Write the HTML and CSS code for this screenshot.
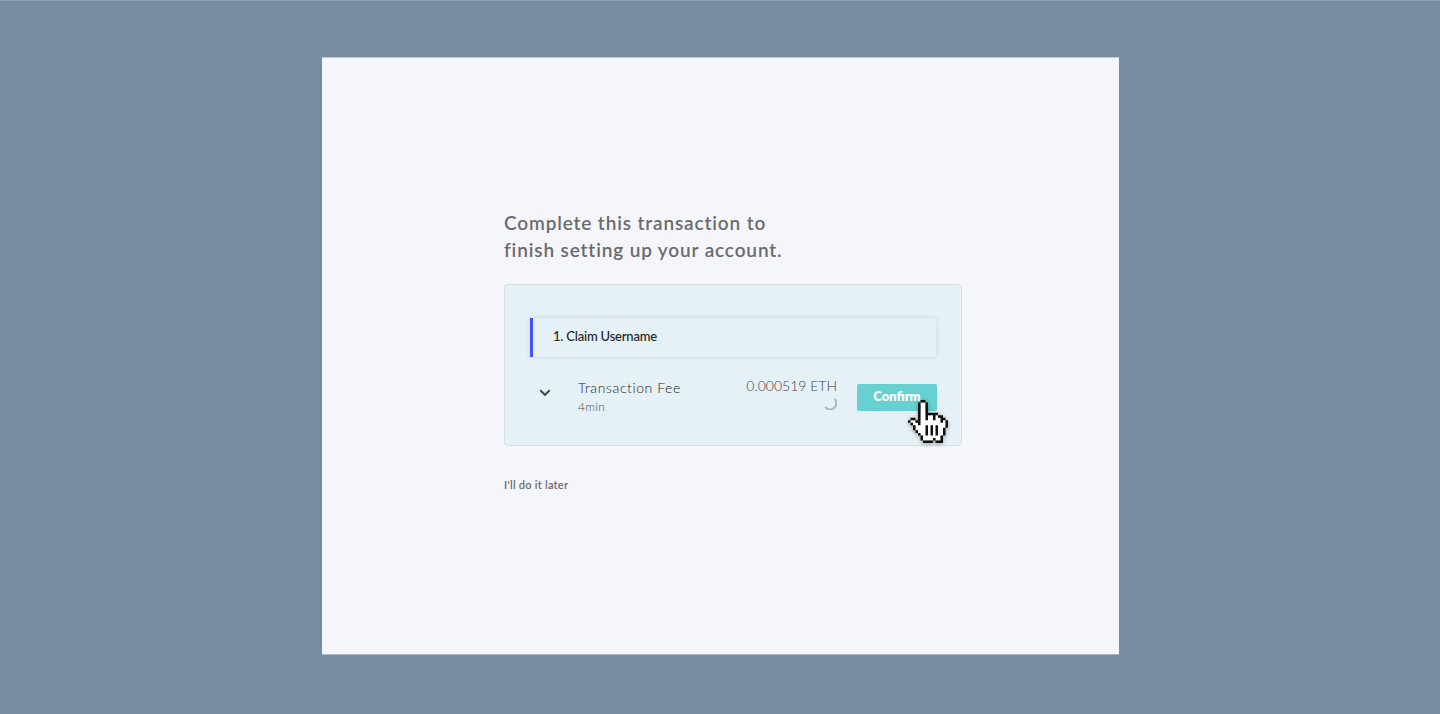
FILE: index.html
```html
<!DOCTYPE html>
<html lang="en">
<head>
<meta charset="utf-8">
<title>Complete transaction</title>
<link rel="stylesheet" href="styles.css">
</head>
<body>
<main class="panel">
  <h1 class="title">Complete this transaction to<br>finish setting up your account.</h1>
  <section class="card">
    <div class="step">1. Claim Username</div>
    <div class="fee">
      <svg class="chevron" width="12" height="8" viewBox="0 0 12 8"><path d="M1.2 1.3 6 5.8l4.8-4.5"/></svg>
      <div class="fee-label"><div class="fee-name">Transaction Fee</div><div class="fee-time">4min</div></div>
      <div class="fee-amount"><div class="eth">0.000519 ETH</div>
        <svg class="spinner" width="14" height="14" viewBox="0 0 14 14"><path d="M11.8 2.8A6 6 0 0 1 2.2 11.2"/></svg>
      </div>
      <div class="action">
        <button class="confirm">Confirm</button>
        <svg class="cursor" width="40" height="43" viewBox="0 0 16 17" preserveAspectRatio="none">
          <path fill="#fff" d="M5 1h2v5h5v1h2v1h1v3h-1v3h-1v2h-2v-1h-1v1H6v-2H5v-1H4v-1H3v-2H2V9H1V8h2v1h1V8h1z"/>
          <path fill="#111" d="M5 0h2v1H5zM4 1h1v9H4zM7 1h1v7H7zM8 5h4v1H8zM10 6h1v2h-1zM12 6h2v1h-2zM13 7h1v2h-1zM14 7h1v1h-1zM15 8h1v3h-1zM14 11h1v3h-1zM13 14h1v2h-1zM6 16h4v1H6zM10 15h1v1h-1zM11 16h3v1h-3zM5 14h1v2H5zM4 13h1v1H4zM3 12h1v1H3zM2 10h1v2H2zM1 9h1v1H1zM0 8h1v1H0zM1 7h2v1H1zM3 8h1v1H3zM7 10h1v4H7zM9 10h1v4H9zM11 10h1v4h-1z"/>
        </svg>
      </div>
    </div>
  </section>
  <a class="later">I'll do it later</a>
</main>
</body>
</html>
```
FILE: styles.css
```css
* { box-sizing: border-box; }
body {
  margin: 0;
  height: 714px;
  padding-top: 56px;
  border-top: 1px solid #90a4b4;
  background: #778ca0;
  font-family: Lato, sans-serif;
  overflow: hidden;
}
.panel {
  width: 797px;
  height: 598px;
  margin-left: 322px;
  padding: 151px 0 0 182px;
  background: #f4f6fb;
  border-top: 1px solid #bcc7d3;
  border-bottom: 1px solid #a9b5c2;
}
.title {
  margin: 0;
  font-size: 19px;
  line-height: 27px;
  font-weight: 600;
  letter-spacing: .86px;
  color: #6b6b6e;
  white-space: nowrap;
}
.card {
  width: 458px;
  height: 162px;
  margin-top: 21px;
  padding: 33px 24px 0 25px;
  background: #e5f1f6;
  border: 1px solid #d5dfe2;
  border-radius: 4px;
}
.step {
  width: 406px;
  height: 39px;
  padding-left: 20px;
  border-left: 3px solid #4353ff;
  border-radius: 0 2px 2px 0;
  box-shadow: 0 0 5px rgba(60, 90, 100, .18);
  font-size: 13px;
  line-height: 37px;
  letter-spacing: -.2px;
  font-weight: 500;
  color: #222;
}
.fee {
  display: flex;
  padding-top: 21px;
}
.fee > * { flex-shrink: 0; }
.chevron {
  margin: 11px 0 0 9px;
  fill: none;
  stroke: #454b50;
  stroke-width: 2;
}
.fee-label { width: 160px; margin-left: 27px; }
.fee-name {
  font-size: 14px;
  line-height: 20px;
  font-weight: 300;
  letter-spacing: .58px;
  color: #1c1e20;
}
.fee-time { font-size: 12px; line-height: 18px; font-weight: 300; letter-spacing: .3px; color: #45494d; }
.fee-amount { width: 99px; text-align: right; }
.eth {
  font-size: 14px;
  line-height: 17px;
  margin-top: -1px;
  font-weight: 300;
  color: #3d4247;
  white-space: nowrap;
}
.spinner { display: block; margin: 2px 0 0 auto; fill: none; stroke: #aeb8bf; stroke-width: 2; }
.action { position: relative; margin: 6px 0 0 20px; }
.confirm {
  display: block;
  width: 80px;
  height: 27px;
  padding: 0 0 2px;
  border: 0;
  border-radius: 2px;
  background: #66d1d0;
  color: #fff;
  font: 800 13px/25px Lato, sans-serif;
}
.cursor {
  position: absolute;
  left: 51px;
  top: 16px;
  filter: drop-shadow(0 1px 2px rgba(0, 0, 0, .35));
}
.later {
  display: block;
  margin-top: 31px;
  font-size: 11px;
  line-height: 16px;
  font-weight: 600;
  letter-spacing: .25px;
  color: #68696c;
}
```
